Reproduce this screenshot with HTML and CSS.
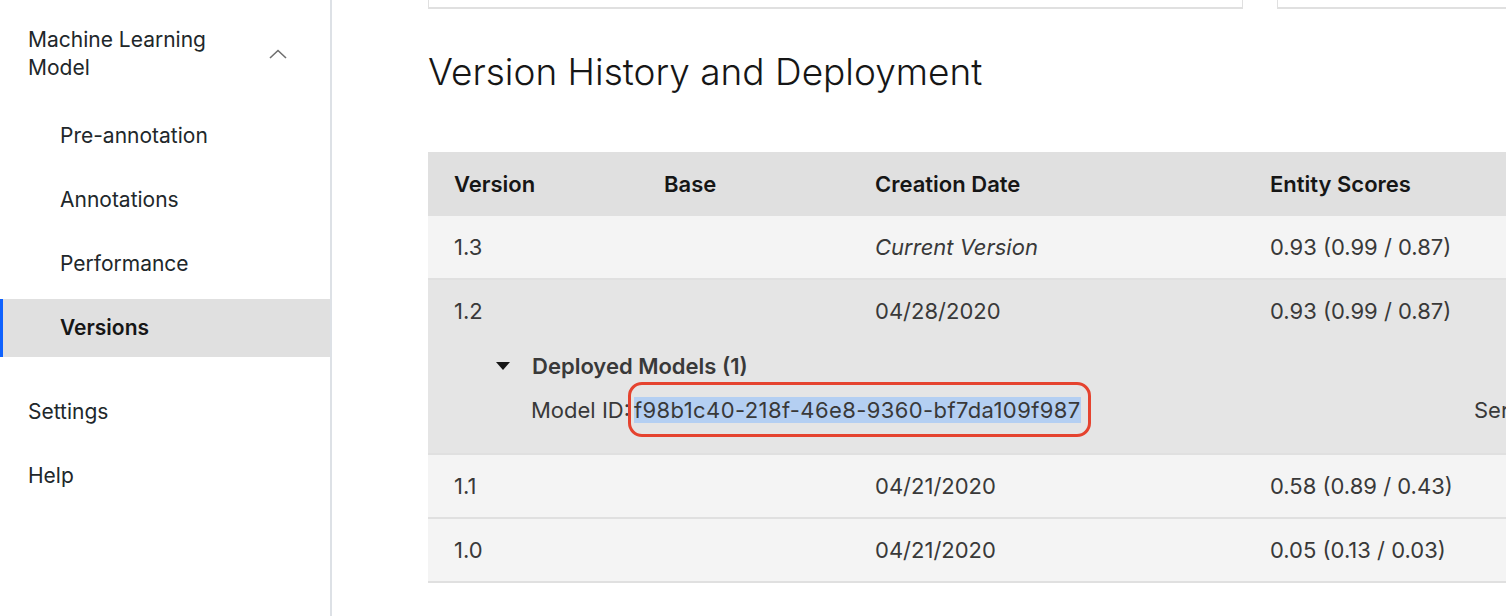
FILE: index.html
```html
<!DOCTYPE html>
<html lang="en">
<head>
    <meta charset="UTF-8">
    <title>Versions</title>
    <link rel="stylesheet" href="styles.css">
</head>
<body>
    <aside class="sidenav">
        <div class="nav-group">
            <span>Machine Learning<br>Model</span>
            <svg class="chevron" width="18" height="10" viewBox="0 0 18 10">
                <path d="M1 9 L9 1.5 L17 9" fill="none" stroke="#6f6f6f" stroke-width="1.6"/>
            </svg>
        </div>
        <ul class="sub-items">
            <li>Pre-annotation</li>
            <li>Annotations</li>
            <li>Performance</li>
            <li class="active">Versions</li>
        </ul>
        <ul class="top-items">
            <li>Settings</li>
            <li>Help</li>
        </ul>
    </aside>
    <main class="content">
        <div class="cards">
            <div class="card"></div>
            <div class="card"></div>
        </div>
        <h1>Version History and Deployment</h1>
        <div class="table">
            <div class="row head">
                <div>Version</div>
                <div>Base</div>
                <div>Creation Date</div>
                <div>Entity Scores</div>
            </div>
            <div class="row">
                <div>1.3</div>
                <div></div>
                <div><em>Current Version</em></div>
                <div>0.93 (0.99 / 0.87)</div>
            </div>
            <div class="row expanded">
                <div class="cells">
                    <div>1.2</div>
                    <div></div>
                    <div>04/28/2020</div>
                    <div>0.93 (0.99 / 0.87)</div>
                </div>
                <div class="deployed">
                    <div class="deployed-title">
                        <svg width="14" height="8" viewBox="0 0 14 8"><path d="M0 0 H14 L7 8 Z" fill="#161616"/></svg>
                        <span>Deployed Models (1)</span>
                    </div>
                    <div class="model-line">
                        <div>Model ID:<span class="model-id">f98b1c40-218f-46e8-9360-bf7da109f987<span class="mark"></span></span></div>
                        <div>Service</div>
                    </div>
                </div>
            </div>
            <div class="row">
                <div>1.1</div>
                <div></div>
                <div>04/21/2020</div>
                <div>0.58 (0.89 / 0.43)</div>
            </div>
            <div class="row">
                <div>1.0</div>
                <div></div>
                <div>04/21/2020</div>
                <div>0.05 (0.13 / 0.03)</div>
            </div>
        </div>
    </main>
</body>
</html>
```
FILE: styles.css
```css
body {
    margin: 0;
    font-family: Inter, "Noto Sans", sans-serif;
    color: #393939;
    background: #fff;
    display: flex;
    height: 100vh;
    overflow: hidden;
}
ul {
    list-style: none;
    margin: 0;
    padding: 0;
}
.sidenav {
    width: 332px;
    flex-shrink: 0;
    border-right: 2px solid #dde1e6;
    padding-top: 26px;
    box-sizing: border-box;
    color: #21272a;
    font-size: 21px;
}
.nav-group {
    display: flex;
    justify-content: space-between;
    align-items: center;
    padding: 0 43px 0 28px;
    line-height: 28px;
    margin-bottom: 25px;
}
.sub-items, .top-items {
    display: flex;
    flex-direction: column;
    gap: 6px;
}
.sub-items {
    margin-bottom: 26px;
}
.sub-items li, .top-items li {
    height: 58px;
    line-height: 58px;
    padding-left: 28px;
}
.sub-items li {
    padding-left: 60px;
}
.sub-items li.active {
    background: #e0e0e0;
    border-left: 3px solid #0f62fe;
    padding-left: 57px;
    font-weight: 600;
    color: #161616;
}
.content {
    padding-left: 96px;
    flex: 1;
    min-width: 0;
}
.cards {
    display: flex;
    gap: 34px;
    margin-top: -20px;
}
.card {
    width: 813px;
    height: 26px;
    border: 1px solid #e0e0e0;
    border-bottom-width: 2px;
    flex-shrink: 0;
}
h1 {
    font-weight: 300;
    font-size: 37px;
    color: #161616;
    margin: 41px 0 0 0;
    line-height: 44px;
}
.table {
    margin-top: 58px;
    width: 1300px;
    font-size: 22px;
}
.row {
    display: grid;
    grid-template-columns: 210px 211px 395px 1fr;
    height: 62px;
    align-items: center;
    background: #f4f4f4;
    border-bottom: 2px solid #e0e0e0;
}
.row > div, .cells > div {
    padding-left: 26px;
}
.row.head {
    height: 64px;
    background: #e0e0e0;
    border-bottom: none;
    font-weight: 600;
    color: #161616;
}
.row em {
    font-style: italic;
}
.row.expanded {
    display: block;
    height: auto;
    background: #e5e5e5;
    padding-bottom: 31px;
}
.row.expanded > .cells {
    padding-left: 0;
}
.cells {
    display: grid;
    grid-template-columns: 210px 211px 395px 1fr;
    height: 62px;
    align-items: center;
}
.row.expanded > .deployed {
    padding-left: 68px;
    margin-top: 12px;
}
.deployed-title {
    display: flex;
    align-items: center;
    gap: 22px;
    font-weight: 600;
    color: #393939;
    height: 24px;
}
.model-line {
    display: grid;
    grid-template-columns: 943px auto;
    margin-top: 20px;
    padding-left: 35px;
    line-height: 24px;
}
.model-id {
    position: relative;
    margin-left: 4px;
    letter-spacing: 0.4px;
    background: #b4cff2;
}
.mark {
    position: absolute;
    left: -6px;
    right: -10px;
    top: -15px;
    bottom: -14px;
    border: 3px solid #e5432f;
    border-radius: 14px;
}
```
